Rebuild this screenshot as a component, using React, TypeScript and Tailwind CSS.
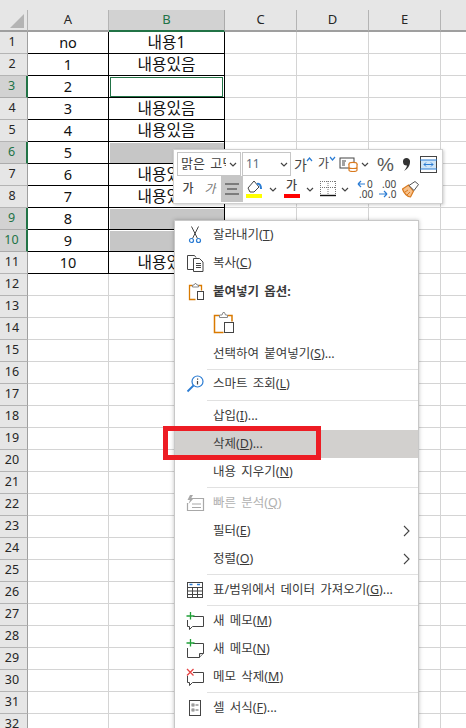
import React from "react";

const rows = Array.from({ length: 32 }, (_, i) => i + 1);
const colA: Record<number, string> = { 1: "no", 2: "1", 3: "2", 4: "3", 5: "4", 6: "5", 7: "6", 8: "7", 9: "8", 10: "9", 11: "10" };
const colB: Record<number, string> = { 1: "내용1", 2: "내용있음", 4: "내용있음", 5: "내용있음", 7: "내용있음", 8: "내용있음", 11: "내용있음" };
const selected = [3, 6, 9, 10];

function ColHead({ label, active }: { label: string; active?: boolean }) {
  return (
    <div
      className={
        active
          ? "h-[22px] bg-[#d2d2d2] border-r border-r-[#ababab] border-b-2 border-b-[#217346] text-[#217346] flex items-center justify-center text-[13px]"
          : "h-[22px] bg-[#e6e6e6] border-r border-r-[#b4b4b4] border-b-2 border-b-[#9f9f9f] text-[#262626] flex items-center justify-center text-[13px]"
      }
    >
      {label}
    </div>
  );
}

function Row({ n }: { n: number }) {
  const sel = selected.includes(n);
  const inTable = n <= 11;
  const lineA = inTable ? "border-b-black border-r-black" : "border-b-[#d4d4d4] border-r-[#d4d4d4]";
  return (
    <>
      <div
        className={
          sel
            ? "h-[22px] bg-[#d2d2d2] border-b border-b-[#ababab] border-r-2 border-r-[#217346] text-[#217346] flex items-center justify-center pr-[3px] text-[12.5px]"
            : "h-[22px] bg-[#e6e6e6] border-b border-b-[#b4b4b4] border-r border-r-[#9f9f9f] text-[#262626] flex items-center justify-center pr-[3px] text-[12.5px]"
        }
      >
        {n}
      </div>
      <div className={`h-[22px] border-b border-r ${lineA} flex items-center justify-center text-[14.5px] text-[#111]`}>{colA[n]}</div>
      <div className={`h-[22px] border-b border-r ${lineA} flex items-center justify-center text-[15.75px] text-[#111] whitespace-nowrap`}>
        {n === 3 && <div className="w-full h-[20px] mx-px border border-[#217346]" />}
        {n !== 3 && sel && <div className="w-full h-[20px] ml-px bg-[#c6c6c6]" />}
        {colB[n]}
      </div>
      <div className="h-[22px] border-b border-r border-[#d4d4d4]" />
      <div className="h-[22px] border-b border-r border-[#d4d4d4]" />
      <div className="h-[22px] border-b border-r border-[#d4d4d4]" />
      <div className="h-[22px] border-b border-[#d4d4d4]" />
    </>
  );
}

function Chevron() {
  return (
    <svg width="8" height="5" viewBox="0 0 8 5" className="shrink-0">
      <path d="M1 1l3 3 3-3" fill="none" stroke="#444" strokeWidth="1.2" />
    </svg>
  );
}

function Toolbar() {
  return (
    <div className="absolute left-[173px] top-[149px] w-[270px] h-[55px] bg-white border border-[#d0d0d0] shadow-[1px_1px_3px_rgba(0,0,0,0.2)] text-[#444]">
      <div className="flex items-center h-[24px] mt-[2px] pl-[3px]">
        <div className="w-[64px] h-[24px] border border-[#c6c6c6] flex items-center pl-[3px] pr-[3px] text-[13px] overflow-hidden">
          <span className="w-[49px] overflow-hidden whitespace-nowrap [word-spacing:2px]">맑은 고딕</span>
          <span className="ml-[3px]"><Chevron /></span>
        </div>
        <div className="w-[49px] h-[24px] ml-px border border-[#c6c6c6] flex items-center justify-between pl-[3px] pr-[2px] text-[12px] text-[#5a6b7b]">
          <span>11</span>
          <Chevron />
        </div>
        <span className="ml-[3px] w-[24px] text-[14px] relative whitespace-nowrap">가<svg width="7" height="5" viewBox="0 0 7 5" className="absolute left-[12px] top-[3px]"><path d="M1 4l2.5-3L6 4" fill="none" stroke="#2b7cd3" strokeWidth="1.2" /></svg></span>
        <span className="w-[21px] text-[12px] relative whitespace-nowrap">가<svg width="7" height="5" viewBox="0 0 7 5" className="absolute left-[11px] top-[1px]"><path d="M1 1l2.5 3L6 1" fill="none" stroke="#2b7cd3" strokeWidth="1.2" /></svg></span>
        <svg width="19" height="18" viewBox="0 0 19 18">
          <rect x="1" y="3" width="14" height="10" fill="#fff" stroke="#444" />
          <path d="M3 6h4M3 8h3M3 10h3" stroke="#444" />
          <ellipse cx="14" cy="9" rx="4" ry="1.6" fill="#fff" stroke="#d97a1e" strokeWidth="1.2" />
          <path d="M10 9v6c0 2 8 2 8 0V9M10 12c0 2 8 2 8 0" fill="#fff" stroke="#d97a1e" strokeWidth="1.2" />
        </svg>
        <span className="ml-[3px]"><Chevron /></span>
        <span className="ml-[8px] w-[22px] text-[19px] leading-none text-[#555] font-['Liberation_Sans',sans-serif]">%</span>
        <svg width="7" height="13" viewBox="0 0 7 13" className="ml-[4px]">
          <path d="M3.500 0a3.500 3.500 0 0 1 3.500 4c0 4-3 7.500-6 9 1.800-2 2.800-4 3-5.500A3.500 3.500 0 0 1 3.500 0z" fill="#333" />
        </svg>
        <svg width="17" height="17" viewBox="0 0 17 17" className="ml-[10px]">
          <rect x="0.5" y="0.5" width="16" height="16" fill="#fff" stroke="#444" />
          <rect x="1" y="4" width="15" height="9" fill="#cfe5f7" />
          <path d="M0 4h17M0 13h17" stroke="#2b7cd3" />
          <path d="M4 8.5h9M4 8.5l2-2M4 8.5l2 2M13 8.5l-2-2M13 8.5l-2 2" fill="none" stroke="#2b7cd3" />
        </svg>
      </div>
      <div className="flex items-center h-[26px] pl-[3px]">
        <span className="w-[22px] text-[12px] font-medium text-center text-[#444]">가</span>
        <span className="w-[22px] text-[12px] italic text-center text-[#777]">가</span>
        <div className="w-[22px] h-[26px] bg-[#c6c6c6] flex items-center justify-center">
          <svg width="14" height="12" viewBox="0 0 14 12"><path d="M0 1h14M2 6h10M0 11h14" stroke="#333" /></svg>
        </div>
        <svg width="18" height="22" viewBox="0 0 18 22" className="ml-[3px]">
          <path d="M2 10l6-7 5 6-5 5H4z" fill="#fff" stroke="#444" />
          <path d="M11 6c3-1 4 2 4 5" fill="none" stroke="#2b7cd3" strokeWidth="2" />
          <rect x="0" y="16" width="16" height="4" fill="#ffff00" />
        </svg>
        <span className="ml-[5px]"><Chevron /></span>
        <div className="relative ml-[7px] w-[16px] h-[22px]">
          <span className="absolute left-[2px] top-0 text-[12px] font-medium leading-[16px] text-[#444]">가</span>
          <span className="absolute left-0 top-[16px] w-[16px] h-[4px] bg-[#ff0000]" />
        </div>
        <span className="ml-[6px]"><Chevron /></span>
        <svg width="16" height="18" viewBox="0 0 16 18" className="ml-[6px]">
          <path d="M0.5 1v13M15.5 1v13M8 1v13M0 1.5h16M0 7.5h16" fill="none" stroke="#777" strokeDasharray="1 1" />
          <path d="M0 15.5h16" stroke="#111" strokeWidth="1.4" />
        </svg>
        <span className="ml-[5px]"><Chevron /></span>
        <svg width="18" height="20" viewBox="0 0 18 20" className="ml-[8px]">
          <path d="M1 5h7M1 5l3-3M1 5l3 3" fill="none" stroke="#2b7cd3" strokeWidth="1.2" />
          <text x="10" y="9" fontSize="10" fill="#444">0</text>
          <text x="2" y="19" fontSize="10" fill="#444">.00</text>
        </svg>
        <svg width="18" height="20" viewBox="0 0 18 20" className="ml-[4px]">
          <text x="3" y="9" fontSize="10" fill="#444">.00</text>
          <path d="M0 15h8M8 15l-3-3M8 15l-3 3" fill="none" stroke="#2b7cd3" strokeWidth="1.2" />
          <text x="9" y="19" fontSize="10" fill="#444">.0</text>
        </svg>
        <svg width="17" height="17" viewBox="0 0 17 17" className="ml-[5px]">
          <path d="M0.500 8l6-4 5 6-3 6c-3 0-7-4-8-8z" fill="#f7c08a" stroke="#d97a1e" strokeWidth="1.2" />
          <path d="M3 11l3-2M5 14l3-3" stroke="#d97a1e" />
          <path d="M7 4.500l6-4 3.500 3-4.500 6z" fill="#fff" stroke="#555" />
        </svg>
      </div>
    </div>
  );
}

const IC = { d: "#444", b: "#2b7cd3", o: "#d97a00", g: "#21a038", r: "#e64545" };

const Scissors = () => (
  <svg width="20" height="20" viewBox="0 0 20 20">
    <path d="M6.5 1.5l6 12M13.5 1.5l-6 12" stroke={IC.d} fill="none" />
    <circle cx="6.5" cy="15.5" r="2" fill="none" stroke={IC.b} strokeWidth="1.2" />
    <circle cx="13.5" cy="15.5" r="2" fill="none" stroke={IC.b} strokeWidth="1.2" />
  </svg>
);
const Copy = () => (
  <svg width="20" height="20" viewBox="0 0 20 20">
    <path d="M8 16.5H2.500v-14h7l1.500 2" fill="none" stroke={IC.d} />
    <path d="M8.500 5.500h6l3.500 3.500v9.500H8.500z" fill="#fff" stroke={IC.d} />
    <path d="M11 10.500h5M11 12.500h5M11 14.500h5" stroke={IC.d} />
  </svg>
);
const PasteSmall = () => (
  <svg width="20" height="20" viewBox="0 0 20 20">
    <path d="M7 3.500H4.500v14h6M14 3.500h2.500v5" fill="none" stroke={IC.o} strokeWidth="1.300" />
    <path d="M7.500 5V3h1.500l1-1.500h1l1 1.500h1.500v2z" fill="#fff" stroke="#888" />
    <rect x="12.500" y="9.500" width="6" height="8" fill="#fff" stroke={IC.d} />
  </svg>
);
const Search = () => (
  <svg width="20" height="20" viewBox="0 0 20 20">
    <circle cx="12.500" cy="7.500" r="5.500" fill="none" stroke={IC.b} strokeWidth="1.200" />
    <path d="M8.500 11.500L2.500 17.500" stroke={IC.b} strokeWidth="1.800" />
    <path d="M12.500 7v3.500" stroke={IC.d} strokeWidth="1.200" />
    <rect x="12" y="4.500" width="1.200" height="1.200" fill={IC.d} />
  </svg>
);
const Quick = () => (
  <svg width="20" height="20" viewBox="0 0 20 20">
    <path d="M6 5.500h12.500v12h-16V10" fill="none" stroke="#a8a8a8" strokeWidth="1.200" />
    <path d="M5 2L2.500 7H5l-1.500 4L8.500 5.500H6L8 2z" fill="#a8a8a8" />
    <path d="M7 11h9M7 14.500h9" stroke="#a8a8a8" strokeWidth="1.200" />
  </svg>
);
const TableIc = () => (
  <svg width="20" height="20" viewBox="0 0 20 20">
    <rect x="2.500" y="2.500" width="15" height="15" fill="#fff" stroke={IC.d} />
    <path d="M2.500 7.500h15M2.500 11h15M2.500 14.500h15M7.500 7.500v10M12.500 7.500v10" stroke={IC.d} />
    <path d="M4.500 4.500h3M12 4.500h3" stroke={IC.b} strokeWidth="1.500" />
  </svg>
);
const Comment = ({ mark }: { mark: "plus" | "x" }) => (
  <svg width="20" height="20" viewBox="0 0 20 20">
    <path d="M8 5.500h10.500v10h-11l-3 3v-3h-2V9" fill="#fff" stroke={IC.d} />
    {mark === "plus" ? (
      <path d="M5.500 1v7.500M1.500 5h8" stroke={IC.g} strokeWidth="1.300" />
    ) : (
      <path d="M2 2l6.500 6.500M8.500 2L2 8.500" stroke={IC.r} strokeWidth="1.300" />
    )}
  </svg>
);
const Note = () => (
  <svg width="20" height="20" viewBox="0 0 20 20">
    <path d="M8 4.500h10.500v10l-4 4h-12V9" fill="#fff" stroke={IC.d} />
    <path d="M14.500 18.500v-4h4" fill="#ddd" stroke={IC.d} />
    <path d="M5.500 0v7.500M1.500 4h8" stroke={IC.g} strokeWidth="1.300" />
  </svg>
);
const CellFmt = () => (
  <svg width="20" height="20" viewBox="0 0 20 20">
    <rect x="4.500" y="2.500" width="11" height="15" fill="#fff" stroke={IC.d} />
    <rect x="7" y="6" width="2" height="2" fill="none" stroke="#666" strokeWidth="0.8" />
    <rect x="7" y="11" width="2" height="2" fill="none" stroke="#666" strokeWidth="0.8" />
    <path d="M10.500 7h3M10.500 12h3" stroke="#666" />
  </svg>
);

function Item({ label, mn, tail, icon, hot, disabled, arrow, bold }: { label: string; mn?: string; tail?: string; icon?: React.ReactNode; hot?: boolean; disabled?: boolean; arrow?: boolean; bold?: boolean }) {
  return (
    <div className={`h-[28px] flex items-center ${hot ? "bg-[#d2d0ce]" : ""} ${disabled ? "text-[#b1b1b1]" : "text-[#3a3a3a]"}`}>
      <div className="w-[38px] pl-[10px] shrink-0 h-[20px]">{icon}</div>
      <span className={`text-[12.5px] whitespace-nowrap [word-spacing:2px] ${bold ? "font-bold" : ""}`}>
        {label}
        {mn && (
          <>
            (<span className="underline">{mn}</span>)
          </>
        )}
        {tail}
      </span>
      {arrow && (
        <svg width="8" height="12" viewBox="0 0 8 12" className="ml-auto mr-[7px]">
          <path d="M1 1l5 5-5 5" fill="none" stroke="#444" strokeWidth="1.100" />
        </svg>
      )}
    </div>
  );
}

function Sep({ wide }: { wide?: boolean }) {
  return <div className={`ml-[32px] h-px bg-[#e1e1e1] mb-px ${wide ? "mt-[2px]" : "mt-px"}`} />;
}

function Menu() {
  return (
    <div className="absolute left-[174px] top-[220px] w-[245px] h-[520px] bg-white border border-[#c8c8c8] shadow-[0_0_4px_rgba(0,0,0,0.25)]">
      <Item label="잘라내기" mn="T" icon={<Scissors />} />
      <Item label="복사" mn="C" icon={<Copy />} />
      <div className="mt-px">
        <Item label="붙여넣기 옵션:" bold icon={<PasteSmall />} />
      </div>
      <div className="h-[34px] pl-[38px] pt-[5px]">
        <svg width="22" height="24" viewBox="0 0 22 24">
          <path d="M6 4.500H1.500v17h9M15 4.500h4v6" fill="none" stroke={IC.o} strokeWidth="1.500" />
          <path d="M6.500 6.500V4h2.500l1-2.500h1.500l1 2.500h2v2.500z" fill="#fff" stroke="#888" />
          <rect x="11.500" y="11.500" width="9" height="10" fill="#fff" stroke={IC.d} />
        </svg>
      </div>
      <Item label="선택하여 붙여넣기" mn="S" tail="..." />
      <div className="ml-[32px] h-px bg-[#e1e1e1] mt-px" />
      <Item label="스마트 조회" mn="L" icon={<Search />} />
      <Sep wide />
      <Item label="삽입" mn="I" tail="..." />
      <Item label="삭제" mn="D" tail="..." hot />
      <Item label="내용 지우기" mn="N" />
      <Sep />
      <Item label="빠른 분석" mn="Q" disabled icon={<Quick />} />
      <Item label="필터" mn="E" arrow />
      <Item label="정렬" mn="O" arrow />
      <Sep />
      <Item label="표/범위에서 데이터 가져오기" mn="G" tail="..." icon={<TableIc />} />
      <Sep />
      <Item label="새 메모" mn="M" icon={<Comment mark="plus" />} />
      <Item label="새 메모" mn="N" icon={<Note />} />
      <Item label="메모 삭제" mn="M" icon={<Comment mark="x" />} />
      <Sep />
      <Item label="셀 서식" mn="F" tail="..." icon={<CellFmt />} />
    </div>
  );
}

export default function App() {
  return (
    <div className="relative w-[466px] h-[728px] overflow-hidden bg-white font-['Noto_Sans','Noto_Sans_CJK_KR',sans-serif]">
      <div className="h-[10px] bg-[#e6e6e6]" />
      <div className="grid grid-cols-[28px_81px_116px_72px_72px_72px_1fr]">
        <div className="h-[22px] bg-[#e6e6e6] border-r border-r-[#b4b4b4] border-b-2 border-b-[#9f9f9f] flex items-end justify-end pr-[3px] pb-[2px]">
          <div className="w-[14px] h-[14px] bg-[#b4b4b4] [clip-path:polygon(100%_0,100%_100%,0_100%)]" />
        </div>
        <ColHead label="A" />
        <ColHead label="B" active />
        <ColHead label="C" />
        <ColHead label="D" />
        <ColHead label="E" />
        <div className="h-[22px] bg-[#e6e6e6] border-b-2 border-b-[#9f9f9f]" />
        {rows.map((n) => (
          <Row key={n} n={n} />
        ))}
      </div>
      <Toolbar />
      <Menu />
      <div className="absolute left-[163px] top-[426px] w-[158px] h-[34px] border-[5px] border-[#ed1c24]" />
    </div>
  );
}
